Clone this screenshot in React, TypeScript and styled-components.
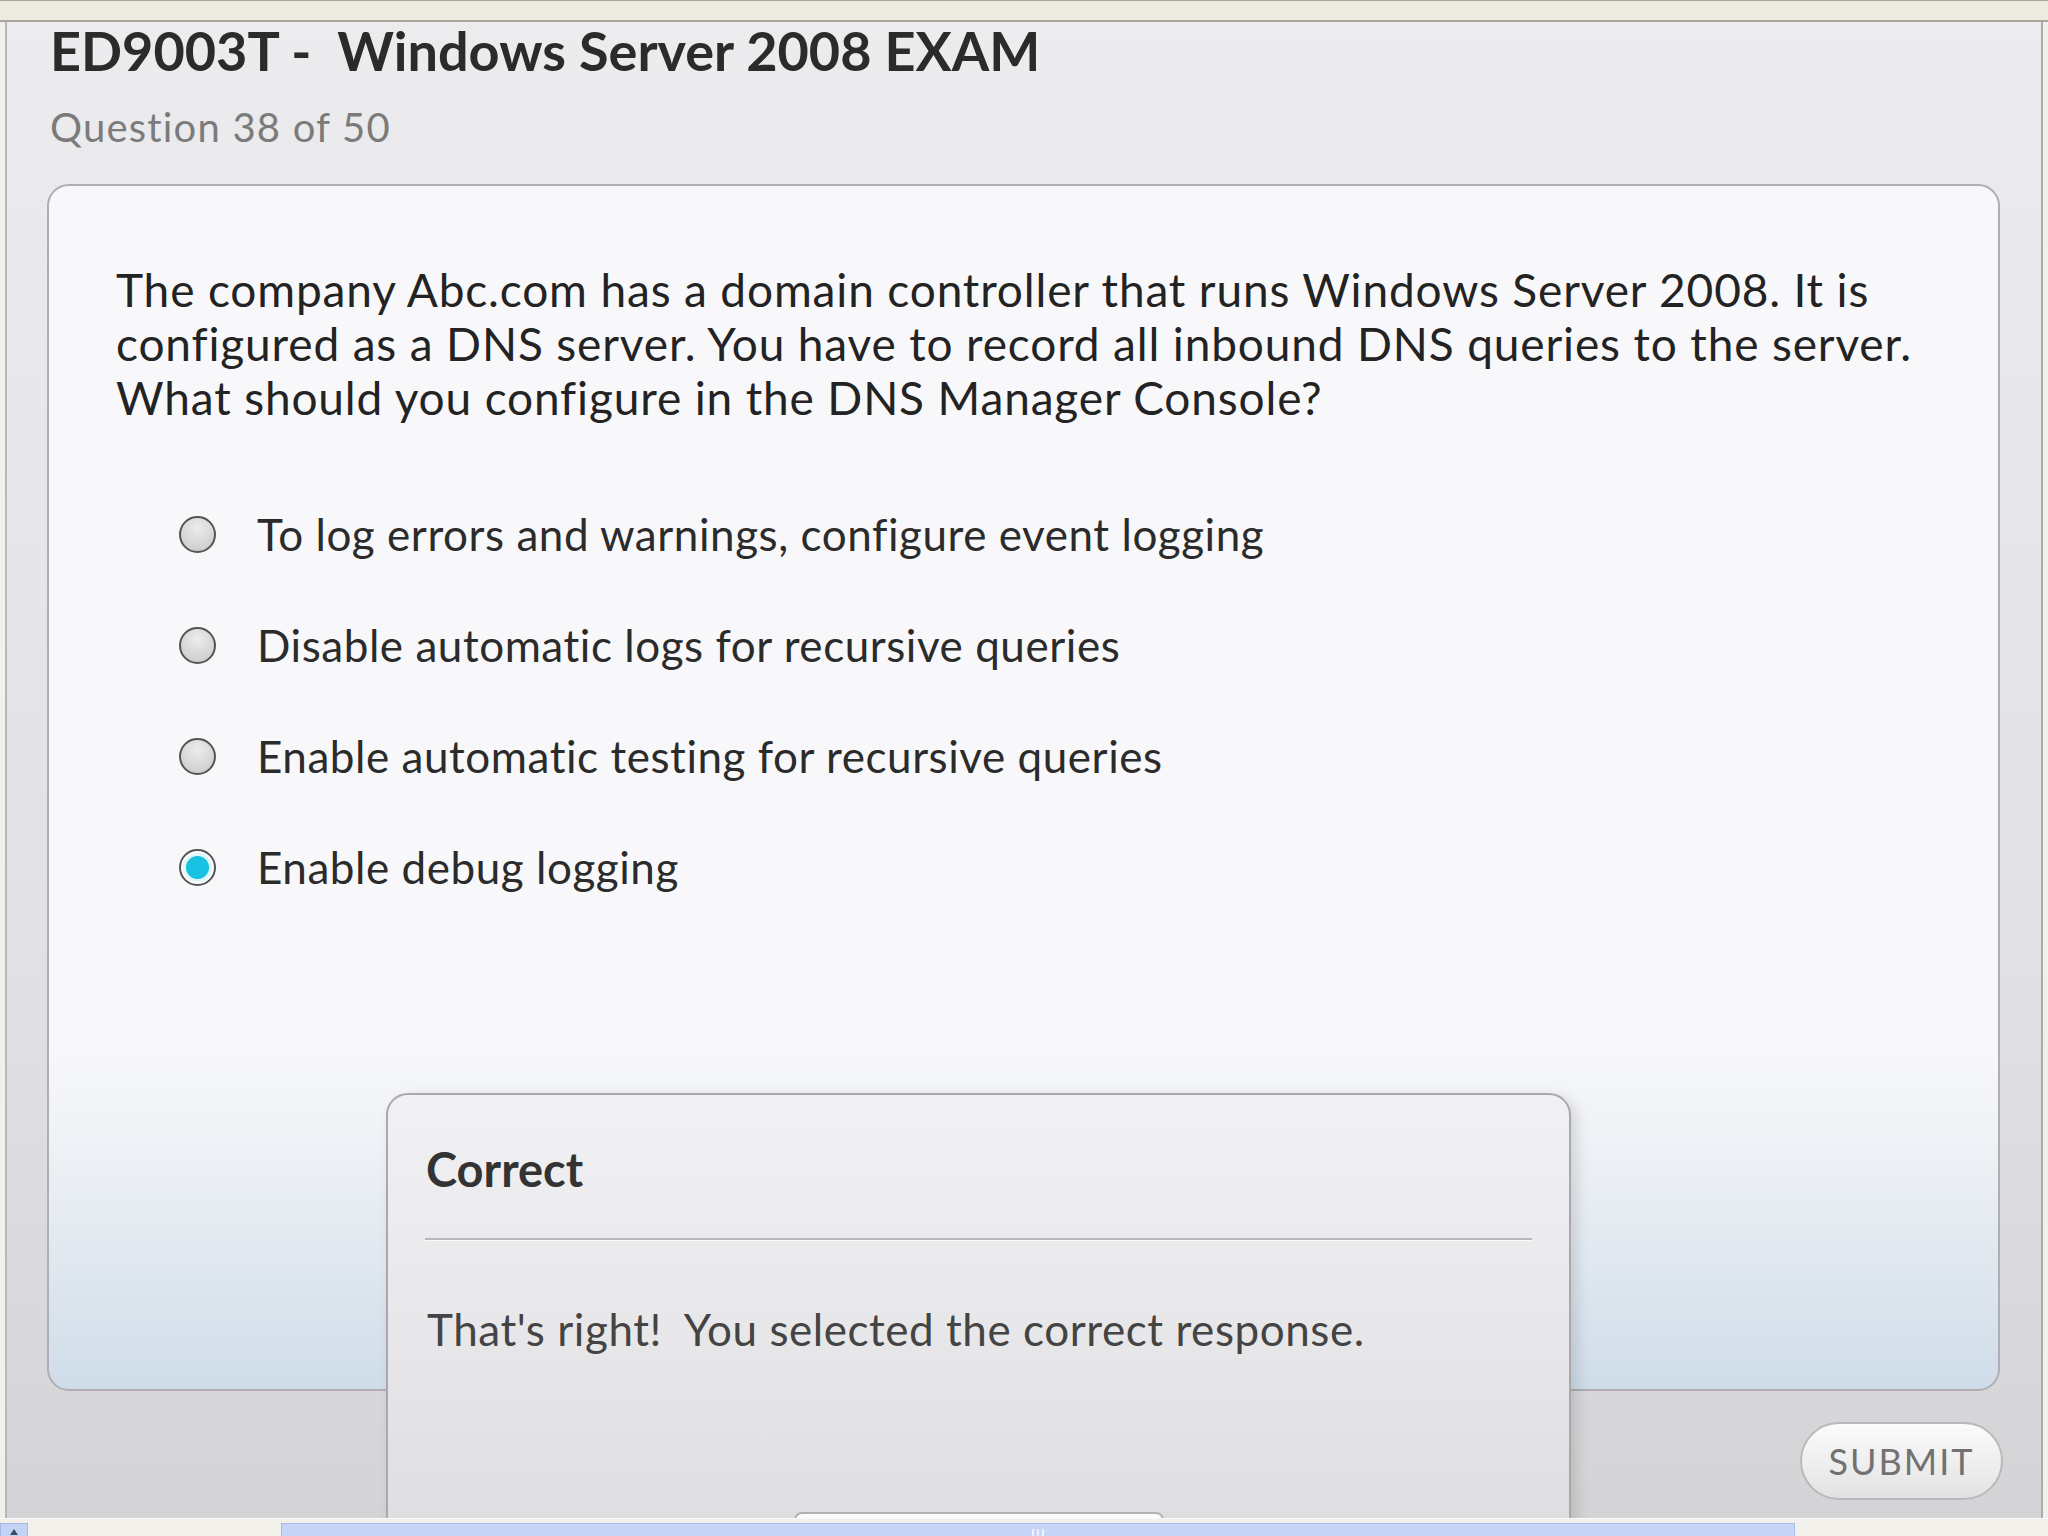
import React from 'react';
import styled, { createGlobalStyle } from 'styled-components';

const GlobalStyle = createGlobalStyle`
  html, body {
    margin: 0;
    padding: 0;
    background: #f1f0ea;
  }
  * {
    box-sizing: border-box;
  }
`;

const Screen = styled.div`
  width: 2048px;
  height: 1536px;
  display: flex;
  flex-direction: column;
  overflow: hidden;
  font-family: Lato, "Open Sans", "DejaVu Sans", sans-serif;
  background: #f1f0ea;
`;

const TopStrip = styled.div`
  height: 22px;
  flex-shrink: 0;
  background: #edebdf;
  border-top: 1px solid #a8a698;
  border-bottom: 2px solid #a9a79c;
`;

const Frame = styled.div`
  position: relative;
  flex: 1;
  margin: 0 5px;
  display: flex;
  flex-direction: column;
  border-left: 2px solid #b8b8bc;
  border-right: 2px solid #ababaf;
  background: linear-gradient(to bottom, #ececee 0%, #e2e2e4 60%, #d4d4d6 100%);
`;

const Header = styled.div`
  padding: 1px 0 0 43px;
`;

const Title = styled.h1`
  margin: 0;
  font-size: 54px;
  line-height: 56px;
  font-weight: 700;
  color: #2b2b2b;
  white-space: pre;
`;

const Subtitle = styled.div`
  margin-top: 26px;
  font-size: 40px;
  line-height: 44px;
  letter-spacing: 1.2px;
  color: #7b7b7b;
`;

const QuestionCard = styled.div`
  margin: 35px 41px 0 40px;
  height: 1207px;
  flex-shrink: 0;
  border: 2px solid #afafb3;
  border-radius: 22px;
  padding: 77px 0 0 67px;
  background: linear-gradient(
    to bottom,
    #f8f8fa 0%,
    #f8f8fa 71%,
    #eff2f6 79%,
    #dfe7ef 90%,
    #cfdce9 100%
  );
`;

const QuestionText = styled.p`
  margin: 0;
  font-size: 46px;
  line-height: 54px;
  letter-spacing: 0.85px;
  color: #232323;
  white-space: nowrap;
`;

const Options = styled.div`
  margin-top: 79px;
  padding-left: 63px;
  display: flex;
  flex-direction: column;
  gap: 51px;
`;

const OptionRow = styled.label`
  height: 60px;
  display: flex;
  align-items: center;
  gap: 41px;
  cursor: pointer;
`;

const Radio = styled.span<{ $checked?: boolean }>`
  width: 37px;
  height: 37px;
  flex-shrink: 0;
  border-radius: 50%;
  border: 2px solid #555;
  background: ${(p) =>
    p.$checked
      ? 'radial-gradient(circle, #17c2e2 0 11px, #dff6fb 12px 14px, #ffffff 15px)'
      : 'radial-gradient(circle at 50% 30%, #ececec 0%, #d2d2d2 70%, #c4c4c4 100%)'};
`;

const OptionText = styled.span`
  font-size: 44px;
  line-height: 60px;
  letter-spacing: 0.55px;
  color: #2b2b2b;
  white-space: nowrap;
`;

const Footer = styled.div`
  display: flex;
  justify-content: flex-end;
  padding: 31px 38px 0 0;
`;

const SubmitButton = styled.button`
  width: 203px;
  height: 78px;
  border-radius: 39px;
  border: 2px solid #b9b9bc;
  background: linear-gradient(to bottom, #fbfbfb 0%, #eeeeef 55%, #e2e2e4 100%);
  font-family: Lato, "Open Sans", sans-serif;
  font-size: 36px;
  letter-spacing: 2px;
  color: #727272;
  padding: 0;
  cursor: pointer;
`;

const FeedbackDialog = styled.div`
  position: absolute;
  left: 379px;
  top: 1071px;
  width: 1185px;
  height: 540px;
  border: 2px solid #a9a9ad;
  border-radius: 22px;
  background: linear-gradient(to bottom, #f1f1f3 0%, #e6e6e8 50%, #d9d9db 100%);
  box-shadow: 6px 4px 14px rgba(0, 0, 0, 0.12);
  padding: 46px 37px 0 37px;
  display: flex;
  flex-direction: column;
`;

const DialogTitle = styled.div`
  padding-left: 1px;
  font-size: 47px;
  line-height: 56px;
  font-weight: 700;
  color: #333;
`;

const Divider = styled.hr`
  margin: 41px 0 0;
  border: none;
  height: 2px;
  background: #b8b8bb;
  box-shadow: 0 1px 0 #fafafa;
`;

const DialogMessage = styled.div`
  margin-top: 64px;
  padding-left: 2px;
  font-size: 44px;
  line-height: 50px;
  letter-spacing: 0.55px;
  color: #444;
  white-space: pre;
`;

const DialogButton = styled.div`
  align-self: center;
  margin-top: 158px;
  width: 370px;
  height: 60px;
  border: 2px solid #b2b2b4;
  border-radius: 8px;
  background: linear-gradient(to bottom, #fdfdfd, #ececee);
`;

const ScrollStrip = styled.div`
  position: relative;
  z-index: 2;
  height: 18px;
  flex-shrink: 0;
  display: flex;
  align-items: flex-start;
  padding-top: 4px;
  background: #f1f0ea;
  border-top: 1px solid #fafaf8;
`;

const ScrollArrow = styled.div`
  width: 28px;
  height: 14px;
  background: #c3d3f6;
  border: 1px solid #a6b9e6;
  display: flex;
  align-items: flex-end;
  justify-content: center;
`;

const ScrollThumb = styled.div`
  margin-left: 253px;
  width: 1514px;
  height: 14px;
  background: #c7d6f8;
  border: 1px solid #a9bce8;
  border-bottom: none;
  display: flex;
  justify-content: center;
  gap: 3px;
  padding-top: 5px;
`;

const Grip = styled.span`
  width: 2px;
  height: 8px;
  background: #eef3ff;
`;

const options = [
  { text: 'To log errors and warnings, configure event logging', checked: false },
  { text: 'Disable automatic logs for recursive queries', checked: false },
  { text: 'Enable automatic testing for recursive queries', checked: false },
  { text: 'Enable debug logging', checked: true },
];

export default function App() {
  return (
    <>
      <GlobalStyle />
      <Screen>
        <TopStrip />
        <Frame>
          <Header>
            <Title>{'ED9003T -  Windows Server 2008 EXAM'}</Title>
            <Subtitle>Question 38 of 50</Subtitle>
          </Header>

          <QuestionCard>
            <QuestionText>
              The company Abc.com has a domain controller that runs Windows Server 2008. It is
              <br />
              configured as a DNS server. You have to record all inbound DNS queries to the server.
              <br />
              What should you configure in the DNS Manager Console?
            </QuestionText>

            <Options role="radiogroup">
              {options.map((o) => (
                <OptionRow key={o.text}>
                  <Radio role="radio" aria-checked={o.checked} $checked={o.checked} />
                  <OptionText>{o.text}</OptionText>
                </OptionRow>
              ))}
            </Options>
          </QuestionCard>

          <Footer>
            <SubmitButton>SUBMIT</SubmitButton>
          </Footer>

          <FeedbackDialog role="dialog">
            <DialogTitle>Correct</DialogTitle>
            <Divider />
            <DialogMessage>{"That's right!  You selected the correct response."}</DialogMessage>
            <DialogButton />
          </FeedbackDialog>
        </Frame>

        <ScrollStrip>
          <ScrollArrow>
            <svg width="10" height="8" viewBox="0 0 10 8">
              <path d="M5 1 L9 7 L1 7 Z" fill="#3b4a6b" />
            </svg>
          </ScrollArrow>
          <ScrollThumb>
            <Grip />
            <Grip />
            <Grip />
          </ScrollThumb>
        </ScrollStrip>
      </Screen>
    </>
  );
}
